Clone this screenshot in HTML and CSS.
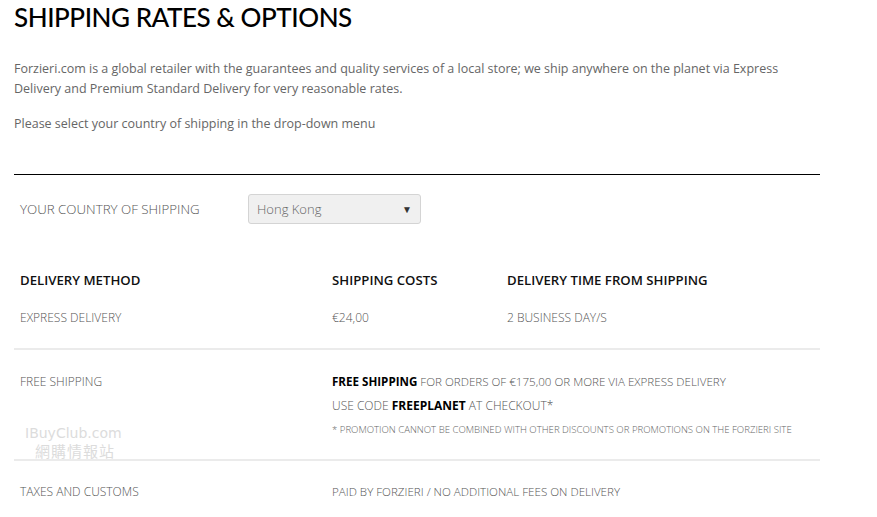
FILE: index.html
```html
<!DOCTYPE html>
<html lang="en">
<head>
<meta charset="utf-8">
<title>Shipping Rates &amp; Options</title>
<link rel="stylesheet" href="styles.css">
</head>
<body>
<div class="page">
  <h1 class="title">SHIPPING RATES &amp; OPTIONS</h1>
  <p class="intro">Forzieri.com is a global retailer with the guarantees and quality services of a local store; we ship anywhere on the planet via Express Delivery and Premium Standard Delivery for very reasonable rates.</p>
  <p class="intro second">Please select your country of shipping in the drop-down menu</p>

  <div class="rule"></div>

  <div class="country">
    <span class="country-label">YOUR COUNTRY OF SHIPPING</span>
    <div class="select">
      <span class="select-value">Hong Kong</span>
      <span class="select-arrow">&#9660;</span>
    </div>
  </div>

  <div class="grid head">
    <div class="c1 th">DELIVERY METHOD</div>
    <div class="th">SHIPPING COSTS</div>
    <div class="th">DELIVERY TIME FROM SHIPPING</div>
  </div>
  <div class="grid row first">
    <div class="c1 td">EXPRESS DELIVERY</div>
    <div class="td">€24,00</div>
    <div class="td">2 BUSINESS DAY/S</div>
  </div>

  <div class="sep"></div>

  <div class="grid row promo">
    <div class="c1 td">FREE SHIPPING</div>
    <div class="span">
      <div class="td small">
        <b>FREE SHIPPING</b> FOR ORDERS OF €175,00 OR MORE VIA EXPRESS DELIVERY
      </div>
      <div class="td gap">USE CODE <b>FREEPLANET</b> AT CHECKOUT*</div>
      <div class="note">* PROMOTION CANNOT BE COMBINED WITH OTHER DISCOUNTS OR PROMOTIONS ON THE FORZIERI SITE</div>
    </div>
  </div>

  <div class="sep"></div>

  <div class="grid row">
    <div class="c1 td">TAXES AND CUSTOMS</div>
    <div class="span td small">PAID BY FORZIERI / NO ADDITIONAL FEES ON DELIVERY</div>
  </div>

  <div class="watermark"><span>IBuyClub.com</span><span class="wm-cn">網購情報站</span></div>
</div>
</body>
</html>
```
FILE: styles.css
```css
html, body {
  margin: 0;
  padding: 0;
  background: #fff;
}
.page {
  position: relative;
  width: 806px;
  padding: 0 0 0 14px;
  font-family: "Open Sans", "Noto Sans", sans-serif;
  color: #555;
}
.title {
  margin: 0;
  padding-top: 1px;
  font-family: "Lato", "Noto Sans", sans-serif;
  font-weight: 500;
  font-size: 26px;
  line-height: 33px;
  color: #000;
  letter-spacing: -0.45px;
}
.intro {
  margin: 25px 0 0;
  font-size: 12.5px;
  line-height: 20px;
  color: #666;
}
.intro.second {
  margin-top: 15px;
}
.rule {
  margin-top: 40px;
  height: 1px;
  background: #000;
}
.country {
  display: flex;
  align-items: center;
  padding: 19px 0 0 6px;
}
.country-label {
  width: 228px;
  font-size: 13.3px;
  font-weight: 300;
  color: #555;
}
.select {
  box-sizing: border-box;
  width: 173px;
  height: 30px;
  display: flex;
  align-items: center;
  justify-content: space-between;
  padding: 0 8px 0 8px;
  background: #f0f0f0;
  border: 1px solid #d4d4d4;
  border-radius: 3px;
  font-size: 13px;
  font-weight: 300;
  color: #666;
}
.select-arrow {
  font-size: 10px;
  color: #333;
}
.grid {
  display: grid;
  grid-template-columns: 318px 175px 1fr;
  line-height: 20px;
}
.grid .span {
  grid-column: 2 / 4;
}
.head {
  margin-top: 46px;
}
.c1 {
  padding-left: 6px;
}
.th {
  font-size: 13.2px;
  font-weight: 600;
  color: #111;
}
.td {
  font-size: 12px;
  font-weight: 300;
  color: #555;
}
.td.small {
  font-size: 11.6px;
}
.td b {
  font-weight: 700;
  color: #000;
}
.row {
  padding: 21px 0 21px;
}
.row.first {
  padding-top: 18px;
  padding-bottom: 20px;
}
.row.promo {
  padding-top: 22px;
  padding-bottom: 19px;
}
.gap {
  margin-top: 4px;
}
.note {
  margin-top: 4px;
  font-size: 9.6px;
  font-weight: 300;
  color: #666;
}
.sep {
  height: 2px;
  background: #ebebeb;
}
.watermark {
  position: absolute;
  left: 25px;
  top: 424px;
  display: flex;
  flex-direction: column;
  font-family: "DejaVu Sans", sans-serif;
  font-size: 14px;
  line-height: 18px;
  color: #dcdcdc;
  pointer-events: none;
}
.wm-cn {
  padding-left: 10px;
  font-family: "Noto Sans CJK TC", sans-serif;
  font-size: 15px;
  letter-spacing: 1px;
}
```
